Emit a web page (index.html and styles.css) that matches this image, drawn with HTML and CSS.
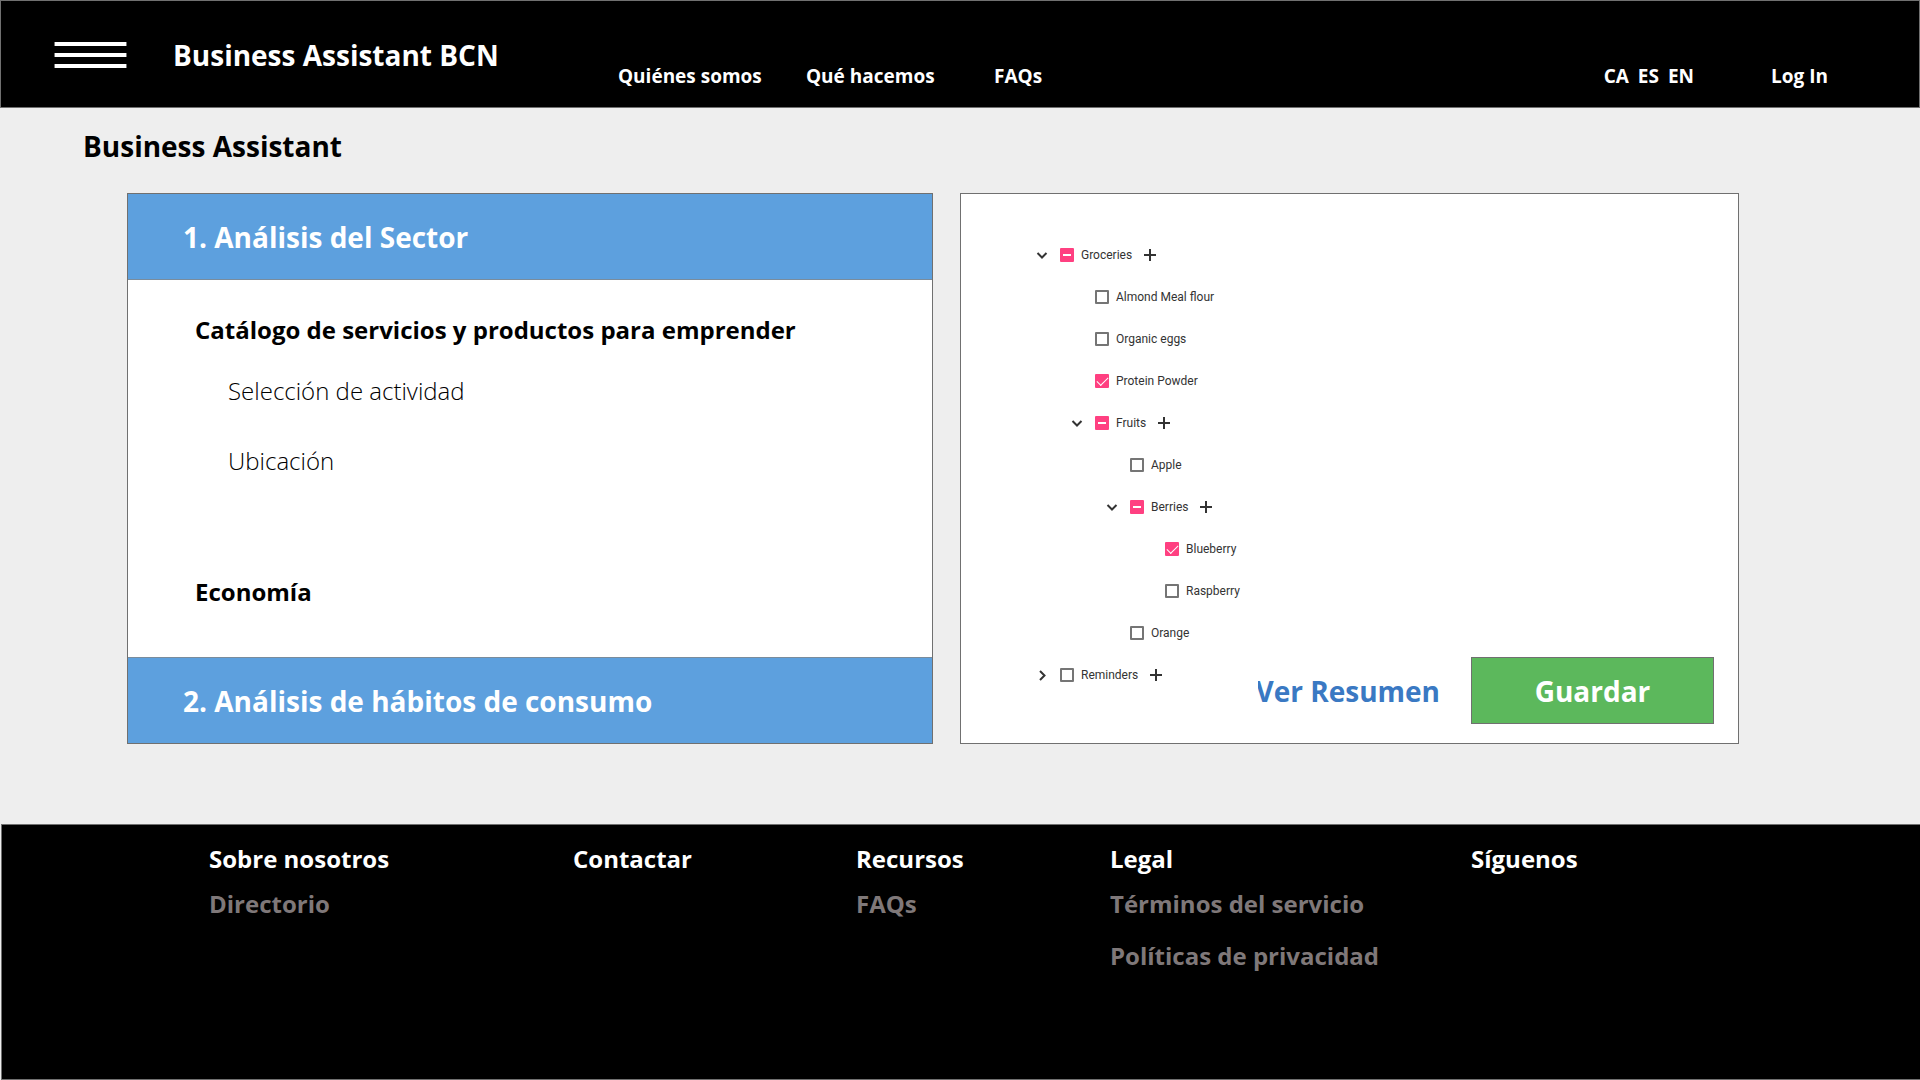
FILE: index.html
```html
<!DOCTYPE html>
<html lang="es">
<head>
<meta charset="utf-8">
<meta name="viewport" content="width=device-width, initial-scale=1">
<title>Business Assistant BCN</title>
<link rel="stylesheet" href="styles.css">
</head>
<body>
<header class="topbar">
  <button class="menu" type="button" aria-label="Menú"><span></span><span></span><span></span></button>
  <a class="brand" href="#">Business Assistant BCN</a>
  <nav class="nav" aria-label="Principal">
    <a href="#">Quiénes somos</a>
    <a href="#">Qué hacemos</a>
    <a href="#">FAQs</a>
  </nav>
  <div class="account">
    <div class="langs"><a href="#">CA</a><a href="#">ES</a><a href="#">EN</a></div>
    <a href="#">Log In</a>
  </div>
</header>

<main class="main">
  <h1 class="title">Business Assistant</h1>
  <div class="panels">
    <section class="panel">
      <h2 class="bar"><button type="button" aria-expanded="true">1. Análisis del Sector</button></h2>
      <div class="content">
        <h3 class="group">Catálogo de servicios y productos para emprender</h3>
        <ul class="options">
          <li><a href="#">Selección de actividad</a></li>
          <li><a href="#">Ubicación</a></li>
        </ul>
        <h3 class="group">Economía</h3>
      </div>
      <h2 class="bar"><button type="button" aria-expanded="false">2. Análisis de hábitos de consumo</button></h2>
    </section>

    <section class="panel picker">
      <ul class="tree">
        <li>
          <div class="row">
            <button class="toggle" type="button" aria-label="Contraer Groceries"><svg width="12" height="12" viewBox="0 0 12 12"><path d="M1.5 4 6 8.500l4.500-4.500"/></svg></button>
            <label><input type="checkbox" aria-checked="mixed">Groceries</label>
            <button class="add" type="button" aria-label="Añadir a Groceries"><svg width="14" height="14" viewBox="0 0 14 14"><path d="M7 1v12M1 7h12"/></svg></button>
          </div>
          <ul>
            <li><div class="row leaf"><label><input type="checkbox">Almond Meal flour</label></div></li>
            <li><div class="row leaf"><label><input type="checkbox">Organic eggs</label></div></li>
            <li><div class="row leaf"><label><input type="checkbox" checked>Protein Powder</label></div></li>
            <li>
              <div class="row">
                <button class="toggle" type="button" aria-label="Contraer Fruits"><svg width="12" height="12" viewBox="0 0 12 12"><path d="M1.5 4 6 8.500l4.500-4.500"/></svg></button>
                <label><input type="checkbox" aria-checked="mixed">Fruits</label>
                <button class="add" type="button" aria-label="Añadir a Fruits"><svg width="14" height="14" viewBox="0 0 14 14"><path d="M7 1v12M1 7h12"/></svg></button>
              </div>
              <ul>
                <li><div class="row leaf"><label><input type="checkbox">Apple</label></div></li>
                <li>
                  <div class="row">
                    <button class="toggle" type="button" aria-label="Contraer Berries"><svg width="12" height="12" viewBox="0 0 12 12"><path d="M1.5 4 6 8.500l4.500-4.500"/></svg></button>
                    <label><input type="checkbox" aria-checked="mixed">Berries</label>
                    <button class="add" type="button" aria-label="Añadir a Berries"><svg width="14" height="14" viewBox="0 0 14 14"><path d="M7 1v12M1 7h12"/></svg></button>
                  </div>
                  <ul>
                    <li><div class="row leaf"><label><input type="checkbox" checked>Blueberry</label></div></li>
                    <li><div class="row leaf"><label><input type="checkbox">Raspberry</label></div></li>
                  </ul>
                </li>
                <li><div class="row leaf"><label><input type="checkbox">Orange</label></div></li>
              </ul>
            </li>
          </ul>
        </li>
        <li>
          <div class="row">
            <button class="toggle" type="button" aria-label="Expandir Reminders"><svg width="12" height="12" viewBox="0 0 12 12"><path d="M4 2 8.500 6.500 4 11"/></svg></button>
            <label><input type="checkbox">Reminders</label>
            <button class="add" type="button" aria-label="Añadir a Reminders"><svg width="14" height="14" viewBox="0 0 14 14"><path d="M7 1v12M1 7h12"/></svg></button>
          </div>
        </li>
      </ul>
      <div class="actions">
        <a class="summary" href="#">Ver Resumen</a>
        <button class="save" type="button">Guardar</button>
      </div>
    </section>
  </div>
</main>

<footer class="footer">
  <section>
    <h2>Sobre nosotros</h2>
    <a href="#">Directorio</a>
  </section>
  <section>
    <h2>Contactar</h2>
  </section>
  <section>
    <h2>Recursos</h2>
    <a href="#">FAQs</a>
  </section>
  <section>
    <h2>Legal</h2>
    <a href="#">Términos del servicio</a>
    <a href="#">Políticas de privacidad</a>
  </section>
  <section>
    <h2>Síguenos</h2>
  </section>
</footer>
</body>
</html>
```
FILE: styles.css
```css
* {
  box-sizing: border-box;
}

body {
  margin: 0;
  min-height: 100vh;
  display: flex;
  flex-direction: column;
  background: #eee;
  color: #000;
  font-family: "Segoe UI", "Open Sans", "Noto Sans", sans-serif;
  font-weight: 700;
}

h1,
h2,
h3,
ul {
  margin: 0;
  padding: 0;
  font-size: inherit;
  font-weight: inherit;
}

ul {
  list-style: none;
}

a {
  color: inherit;
  text-decoration: none;
}

button {
  padding: 0;
  border: 0;
  background: none;
  color: inherit;
  font: inherit;
  cursor: pointer;
}

/* Top bar */

.topbar {
  min-height: 108px;
  display: flex;
  align-items: center;
  padding: 2px 91px 0 53px;
  border: 1px solid #707070;
  background: #000;
  color: #fff;
}

.menu {
  width: 73px;
  margin-right: 46px;
  display: flex;
  flex-direction: column;
  gap: 7px;
}

.menu span {
  width: 100%;
  height: 4px;
  border: 0 solid #707070;
  border-width: 0 1px;
  background: #fff;
}

.brand {
  flex: 0 0 445px;
  font-size: 28px;
  line-height: 40px;
}

.nav,
.account {
  align-self: flex-end;
  padding-bottom: 17px;
  font-size: 19px;
  line-height: 28px;
}

.nav {
  display: grid;
  grid-template-columns: repeat(3, 188px);
}

.account {
  margin-left: auto;
  display: flex;
  gap: 77px;
}

.langs {
  display: flex;
  gap: 9px;
}

/* Main area */

.main {
  padding: 18px 181px 80px 83px;
}

.title {
  font-size: 28px;
  line-height: 40px;
}

.panels {
  display: grid;
  grid-template-columns: 806fr 779fr;
  gap: 27px;
  margin: 27px 0 0 44px;
}

.panel {
  border: 1px solid #707070;
  background: #fff;
}

.bar {
  background: #5da0de;
  color: #fff;
}

.bar:first-child {
  border-bottom: 1px solid #7a8c9c;
}

.bar:last-child {
  border-top: 1px solid #7a8c9c;
}

.bar button {
  width: 100%;
  min-height: 85px;
  padding-left: 55px;
  font-size: 28px;
  line-height: 40px;
  text-align: left;
}

.content {
  padding: 32px 67px 47px;
}

.group,
.options {
  font-size: 24px;
  line-height: 36px;
}

.options {
  display: flex;
  flex-direction: column;
  gap: 34px;
  padding: 25px 0 95px 33px;
  font-weight: 300;
}

/* Tree of products */

.picker {
  display: flex;
  justify-content: space-between;
  padding: 40px 24px 19px 75px;
}

.tree {
  color: #333;
  font-family: Roboto, "Liberation Sans", sans-serif;
  font-size: 12px;
  font-weight: 400;
}

.tree ul {
  padding-left: 35px;
}

.row {
  height: 42px;
  display: flex;
  align-items: center;
}

.leaf {
  padding-left: 24px;
}

.row label {
  display: flex;
  align-items: center;
  gap: 7px;
}

.row svg {
  display: block;
  fill: none;
  stroke: #333;
  stroke-width: 2;
}

.toggle {
  width: 24px;
}

.add {
  margin-left: 11px;
}

.row input {
  appearance: none;
  width: 14px;
  height: 14px;
  margin: 0;
  display: grid;
  place-items: center;
  border: 2px solid #757575;
  border-radius: 1px;
}

.row input:checked,
.row input[aria-checked="mixed"] {
  border-color: #ff4081;
  background: #ff4081;
}

.row input[aria-checked="mixed"]::before {
  content: "";
  width: 8px;
  height: 2px;
  background: #fff;
}

.row input:checked::before {
  content: "";
  width: 10px;
  height: 5px;
  margin-bottom: 3px;
  border: solid #fff;
  border-width: 0 0 1px 1px;
  rotate: -45deg;
}

.actions {
  align-self: flex-end;
  display: flex;
  align-items: center;
  gap: 31px;
  font-size: 28px;
  line-height: 40px;
}

.summary {
  overflow: hidden;
  color: #3a79c3;
  text-indent: -3px;
}

.save {
  width: 243px;
  height: 67px;
  border: 1px solid #707070;
  background: #5cb85c;
  color: #fff;
}

/* Footer */

.footer {
  flex: 1;
  display: grid;
  grid-template-columns: 364fr 283fr 254fr 361fr 449fr;
  margin-left: 1px;
  padding: 16px 0 15px 207px;
  border: 1px solid #707070;
  border-right: 0;
  background: #000;
  color: #7f7879;
  font-size: 24px;
  line-height: 36px;
}

.footer h2 {
  margin-bottom: 9px;
  color: #fff;
}

.footer a {
  display: block;
  margin-bottom: 16px;
}
```
